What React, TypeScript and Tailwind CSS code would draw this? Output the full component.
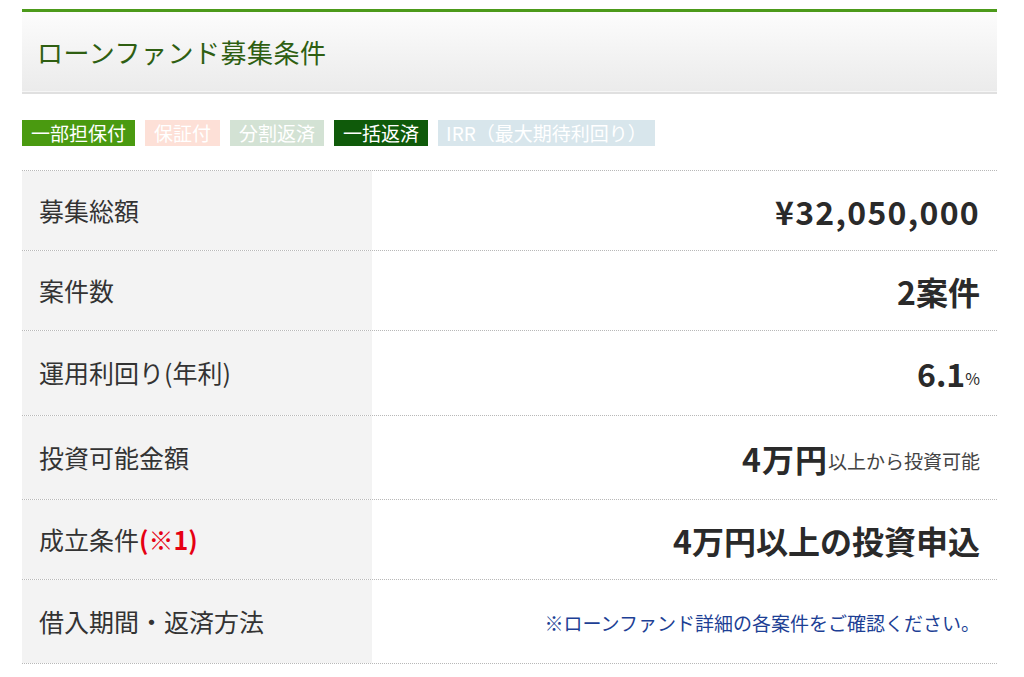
import React from "react";

const font = { fontFamily: '"Noto Sans CJK JP", "Noto Sans", sans-serif' };

function Row({ label, children, h }: { label: React.ReactNode; children: React.ReactNode; h: string }) {
  return (
    <div className={`flex border-b border-dotted border-[#b8b8b8] ${h}`}>
      <div className="w-[350px] shrink-0 bg-[#f3f3f3] flex items-center pl-[17px] text-[25px] text-[#333]">
        {label}
      </div>
      <div className="flex-1 flex items-center justify-end pr-[17px] text-[#2a2a2a]">{children}</div>
    </div>
  );
}

export default function App() {
  return (
    <div className="w-[1024px] h-[677px] bg-white overflow-hidden" style={font}>
      <div className="ml-[22px] w-[975px] pt-[9px]">
        <div className="border-t-[3px] border-[#4c9a1a] bg-gradient-to-b from-[#fcfcfc] to-[#ebebeb] h-[82px] flex items-center pl-[15px]">
          <span className="text-[26px] text-[#2f5f12] tracking-[0.5px]">ローンファンド募集条件</span>
        </div>
        <div className="h-[3px] bg-[#e0e0e0] border-t border-[#f6f6f6]" />
        <div className="flex gap-[10px] mt-[26px] text-[19px] text-white">
          <div className="h-[26px] leading-[26px] px-[9px] bg-[#4a9a10]">一部担保付</div>
          <div className="h-[26px] leading-[26px] px-[9px] bg-[#fde0d7]">保証付</div>
          <div className="h-[26px] leading-[26px] px-[9px] bg-[#d3e2d4]">分割返済</div>
          <div className="h-[26px] leading-[26px] px-[9px] bg-[#0f5a0a]">一括返済</div>
          <div className="h-[26px] leading-[26px] px-[8px] bg-[#d8e6ec]">IRR（最大期待利回り）</div>
        </div>
        <div className="mt-[24px] border-t border-dotted border-[#b8b8b8]">
          <Row label="募集総額" h="h-[80px]">
            <span className="text-[32px] font-bold tracking-[1.3px]">¥32,050,000</span>
          </Row>
          <Row label="案件数" h="h-[80px]">
            <span className="text-[32px] font-bold">2案件</span>
          </Row>
          <Row label="運用利回り(年利)" h="h-[85px]">
            <span className="text-[32px] font-bold">6.1</span>
            <span className="text-[16px] mt-[10px]">%</span>
          </Row>
          <Row label="投資可能金額" h="h-[84px]">
            <span className="text-[32px] font-bold tracking-[1px]">4万円</span>
            <span className="text-[19px] text-[#444] mt-[8px]">以上から投資可能</span>
          </Row>
          <Row
            label={
              <>
                成立条件<span className="text-[#e60012] font-bold">(※1)</span>
              </>
            }
            h="h-[80px]"
          >
            <span className="text-[32px] font-bold">4万円以上の投資申込</span>
          </Row>
          <Row label="借入期間・返済方法" h="h-[84px]">
            <span className="text-[19px] text-[#1d3f95] mt-[4px]">※ローンファンド詳細の各案件をご確認ください。</span>
          </Row>
        </div>
      </div>
    </div>
  );
}
